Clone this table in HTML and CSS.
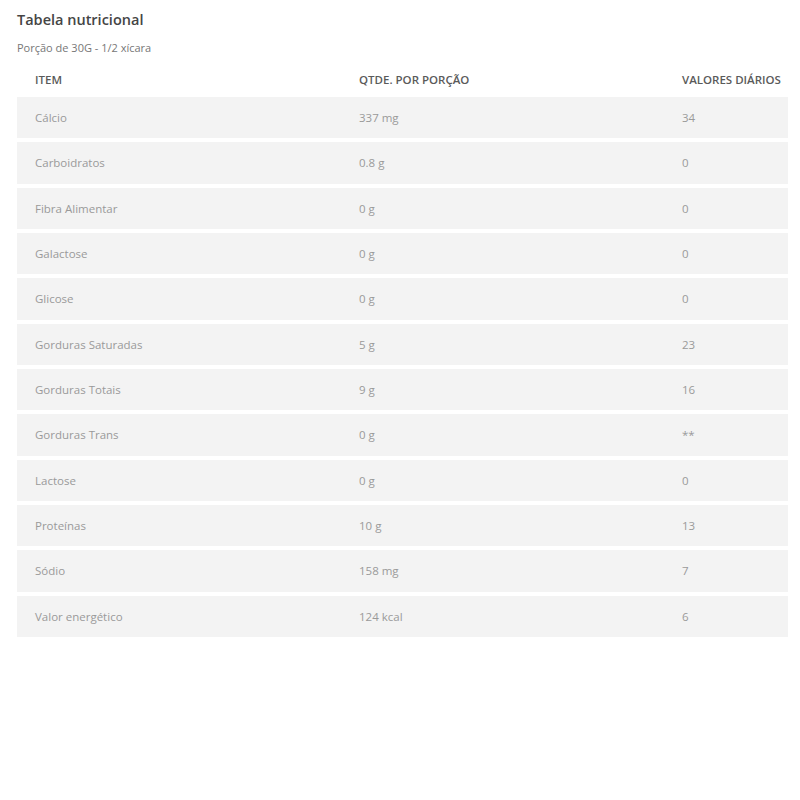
FILE: index.html
```html
<!DOCTYPE html>
<html lang="pt-BR">
<head>
<meta charset="utf-8">
<title>Tabela nutricional</title>
<link rel="stylesheet" href="styles.css">
</head>
<body>
<div class="page">
  <h1 class="title">Tabela nutricional</h1>
  <p class="portion">Porção de 30G - 1/2 xícara</p>
  <div class="table">
    <div class="row head"><span>ITEM</span><span>QTDE. POR PORÇÃO</span><span>VALORES DIÁRIOS</span></div>
    <div class="row"><span>Cálcio</span><span>337 mg</span><span>34</span></div>
    <div class="row"><span>Carboidratos</span><span>0.8 g</span><span>0</span></div>
    <div class="row"><span>Fibra Alimentar</span><span>0 g</span><span>0</span></div>
    <div class="row"><span>Galactose</span><span>0 g</span><span>0</span></div>
    <div class="row"><span>Glicose</span><span>0 g</span><span>0</span></div>
    <div class="row"><span>Gorduras Saturadas</span><span>5 g</span><span>23</span></div>
    <div class="row"><span>Gorduras Totais</span><span>9 g</span><span>16</span></div>
    <div class="row"><span>Gorduras Trans</span><span>0 g</span><span>**</span></div>
    <div class="row"><span>Lactose</span><span>0 g</span><span>0</span></div>
    <div class="row"><span>Proteínas</span><span>10 g</span><span>13</span></div>
    <div class="row"><span>Sódio</span><span>158 mg</span><span>7</span></div>
    <div class="row"><span>Valor energético</span><span>124 kcal</span><span>6</span></div>
  </div>
</div>
</body>
</html>
```
FILE: styles.css
```css
html, body {
  margin: 0;
  padding: 0;
  background: #ffffff;
}
body {
  font-family: "Open Sans", "Liberation Sans", sans-serif;
}
.page {
  padding: 10px 12px 0 17px;
}
.title {
  margin: 0;
  font-size: 14.5px;
  line-height: 20px;
  font-weight: 600;
  color: #454545;
}
.portion {
  margin: 10px 0 0;
  font-size: 11px;
  line-height: 16px;
  color: #777777;
}
.table {
  margin-top: 10px;
  display: flex;
  flex-direction: column;
  gap: 4px;
}
.row {
  display: grid;
  grid-template-columns: 324px 323px 1fr;
  align-items: center;
  height: 41.33px;
  padding: 0 18px;
  background: #f3f3f3;
  font-size: 11.5px;
  color: #9a9a9a;
  white-space: nowrap;
}
.row.head {
  height: 27px;
  background: transparent;
  font-weight: 600;
  color: #5a5a5a;
}
```
